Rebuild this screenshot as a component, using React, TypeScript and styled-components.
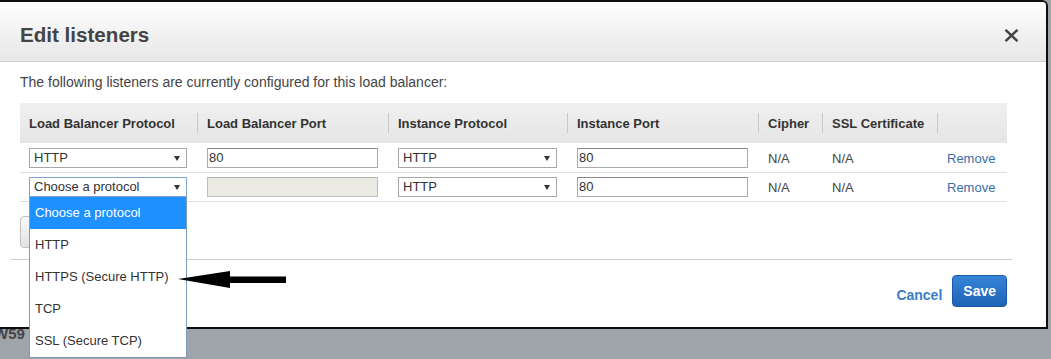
import styled, { createGlobalStyle } from "styled-components";

const GlobalStyle = createGlobalStyle`
  html, body {
    margin: 0;
    padding: 0;
    background: #9fa4aa;
  }
  body {
    font-family: "Liberation Sans", Arial, sans-serif;
    font-size: 13px;
    color: #444;
  }
`;

const Page = styled.div`
  position: relative;
  width: 1051px;
  height: 359px;
  overflow: hidden;
`;

const PageLabel = styled.span`
  position: absolute;
  left: -6px;
  top: 325px;
  font-weight: bold;
  font-size: 15px;
  color: #444;
  z-index: 0;
`;

const Modal = styled.div`
  position: relative;
  z-index: 1;
  box-sizing: border-box;
  width: 1048px;
  height: 329px;
  background: #fff;
  border: 2px solid #0d0d0d;
  border-left: none;
  border-top-right-radius: 6px;
  display: flex;
  flex-direction: column;
`;

const Header = styled.div`
  display: flex;
  align-items: center;
  justify-content: space-between;
  padding: 21px 27px 14px 20px;
  background: linear-gradient(#fefefe, #e7e7e7);
  border-bottom: 1px solid #cfcfcf;
  border-top-right-radius: 4px;
`;

const Title = styled.h2`
  margin: 0;
  font-size: 20.6px;
  line-height: 24px;
  font-weight: bold;
  color: #444;
`;

const CloseButton = styled.button`
  border: none;
  background: none;
  padding: 0;
  width: 15px;
  height: 13px;
  display: flex;
  cursor: pointer;
`;

const Body = styled.div`
  padding: 12px 0 0 20px;
`;

const Intro = styled.p`
  margin: 0 0 13px;
  font-size: 14px;
  line-height: 16px;
  color: #444;
`;

const COLS = "177px 191px 179px 191px 64px 115px 70px";

const Grid = styled.div`
  width: 987px;
`;

const HeadRow = styled.div`
  display: grid;
  grid-template-columns: ${COLS};
  height: 40px;
  margin-bottom: 1px;
  background: linear-gradient(#f0f0f0, #e5e5e5);
`;

const HeadCell = styled.div`
  position: relative;
  display: flex;
  align-items: center;
  padding: 0 10px;
  font-weight: bold;
  color: #333;
  white-space: nowrap;

  &:first-child {
    padding-left: 9px;
  }
  &:not(:first-child)::before {
    content: "";
    position: absolute;
    left: 0;
    top: 10px;
    bottom: 10px;
    border-left: 1px solid #c9c9c9;
  }
`;

const Row = styled.div`
  display: grid;
  grid-template-columns: ${COLS};
  height: 28px;
  border-bottom: 1px solid #dedede;
`;

const Cell = styled.div`
  display: flex;
  align-items: center;
  padding: 0 10px;
  color: #444;

  &:first-child {
    padding-left: 9px;
  }
`;

const SelectBox = styled.div<{ $focused?: boolean }>`
  position: relative;
  box-sizing: border-box;
  width: 100%;
  height: 20px;
  padding-left: 4px;
  line-height: 18px;
  color: #333;
  background: #fff;
  border: 1px solid ${(p) => (p.$focused ? "#7fa3cf" : "#a7a7a7")};

  &::after {
    content: "";
    position: absolute;
    right: 6px;
    top: 7px;
    border-left: 3px solid transparent;
    border-right: 3px solid transparent;
    border-top: 5px solid #333;
  }
`;

const TextInput = styled.div<{ $disabled?: boolean }>`
  box-sizing: border-box;
  width: 100%;
  height: 20px;
  padding-left: 1px;
  line-height: 18px;
  color: #333;
  background: ${(p) => (p.$disabled ? "#ebebe4" : "#fff")};
  border: 1px solid ${(p) => (p.$disabled ? "#bdbdbd" : "#a9a9a9")};
  border-top-color: ${(p) => (p.$disabled ? "#b0b0b0" : "#8a8a8a")};
`;

const RemoveLink = styled.a`
  color: #3b6ea5;
  text-decoration: none;
  cursor: pointer;
`;

const Dropdown = styled.ul`
  position: absolute;
  z-index: 3;
  left: -1px;
  right: -1px;
  top: calc(100% + 1px);
  margin: 0;
  padding: 0;
  list-style: none;
  background: #fff;
  border: 1px solid #7f9db9;
  border-top: none;
`;

const Option = styled.li<{ $active?: boolean }>`
  height: 32px;
  line-height: 32px;
  padding-left: 5px;
  color: ${(p) => (p.$active ? "#fff" : "#333")};
  background: ${(p) => (p.$active ? "#1e90ff" : "transparent")};
`;

const AddButton = styled.button`
  display: block;
  margin: 14px 0 11px;
  height: 32px;
  padding: 0 14px;
  font-family: inherit;
  font-size: 13px;
  font-weight: bold;
  color: #444;
  background: linear-gradient(#fafafa, #e2e2e2);
  border: 1px solid #c2c2c2;
  border-radius: 4px;
`;

const Divider = styled.hr`
  margin: 0 0 0 -10px;
  width: 1002px;
  border: none;
  border-top: 1px solid #cfcfcf;
`;

const Footer = styled.div`
  display: flex;
  justify-content: flex-end;
  align-items: center;
  gap: 10px;
  padding: 15px 39px 0 0;
`;

const CancelLink = styled.a`
  margin-top: 8px;
  font-size: 14px;
  font-weight: bold;
  color: #3b7dc5;
  cursor: pointer;
`;

const SaveButton = styled.button`
  height: 32px;
  padding: 0 10px;
  font-family: inherit;
  font-size: 14px;
  font-weight: bold;
  color: #fff;
  background: linear-gradient(#3584d8, #1f63b6);
  border: 1px solid #1b5aa7;
  border-radius: 4px;
`;

const Annotation = styled.svg`
  position: absolute;
  z-index: 4;
  left: 178px;
  top: 270px;
`;

type Listener = {
  lbProtocol: string;
  lbPort: string;
  instProtocol: string;
  instPort: string;
  choosing?: boolean;
};

const listeners: Listener[] = [
  { lbProtocol: "HTTP", lbPort: "80", instProtocol: "HTTP", instPort: "80" },
  { lbProtocol: "Choose a protocol", lbPort: "", instProtocol: "HTTP", instPort: "80", choosing: true },
];

const protocols = ["Choose a protocol", "HTTP", "HTTPS (Secure HTTP)", "TCP", "SSL (Secure TCP)"];

const headings = [
  "Load Balancer Protocol",
  "Load Balancer Port",
  "Instance Protocol",
  "Instance Port",
  "Cipher",
  "SSL Certificate",
  "",
];

export default function App() {
  return (
    <>
      <GlobalStyle />
      <Page>
        <PageLabel>W59</PageLabel>
        <Modal>
          <Header>
            <Title>Edit listeners</Title>
            <CloseButton aria-label="Close">
              <svg width="15" height="13" viewBox="0 0 15 13">
                <path d="M1.5 0.8 L13.5 12.2 M13.5 0.8 L1.5 12.2" stroke="#444" strokeWidth="2.4" />
              </svg>
            </CloseButton>
          </Header>
          <Body>
            <Intro>The following listeners are currently configured for this load balancer:</Intro>
            <Grid>
              <HeadRow>
                {headings.map((h, i) => (
                  <HeadCell key={i}>{h}</HeadCell>
                ))}
              </HeadRow>
              {listeners.map((l, i) => (
                <Row key={i}>
                  <Cell>
                    <SelectBox $focused={l.choosing}>
                      {l.lbProtocol}
                      {l.choosing && (
                        <Dropdown>
                          {protocols.map((p, j) => (
                            <Option key={p} $active={j === 0}>
                              {p}
                            </Option>
                          ))}
                        </Dropdown>
                      )}
                    </SelectBox>
                  </Cell>
                  <Cell>
                    <TextInput $disabled={l.choosing}>{l.lbPort}</TextInput>
                  </Cell>
                  <Cell>
                    <SelectBox>{l.instProtocol}</SelectBox>
                  </Cell>
                  <Cell>
                    <TextInput>{l.instPort}</TextInput>
                  </Cell>
                  <Cell>N/A</Cell>
                  <Cell>N/A</Cell>
                  <Cell>
                    <RemoveLink>Remove</RemoveLink>
                  </Cell>
                </Row>
              ))}
            </Grid>
            <AddButton>Add</AddButton>
            <Divider />
          </Body>
          <Footer>
            <CancelLink>Cancel</CancelLink>
            <SaveButton>Save</SaveButton>
          </Footer>
        </Modal>
        <Annotation width="110" height="20" viewBox="0 0 110 20">
          <polygon points="0,9 52,1 52,6.5 108,6.5 108,13 52,13 52,18" fill="#000" />
        </Annotation>
      </Page>
    </>
  );
}
